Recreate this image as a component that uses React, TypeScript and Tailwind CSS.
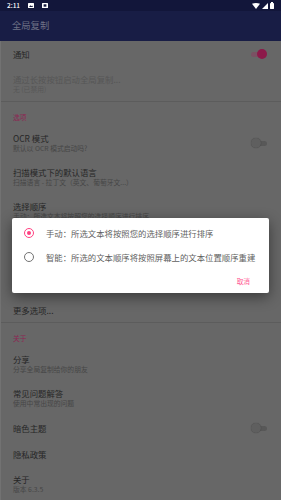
const font = { fontFamily: '"Noto Sans CJK SC", "Noto Sans", sans-serif' };

const Toggle = ({ on }: { on?: boolean }) =>
  on ? (
    <div className="relative w-[16px] h-[10px] flex items-center">
      <div className="w-[14px] h-[5px] rounded-full bg-[#7a5163]" />
      <div className="absolute right-0 top-0 w-[10px] h-[10px] rounded-full bg-[#8c1a4a]" />
    </div>
  ) : (
    <div className="relative w-[16px] h-[10px] flex items-center">
      <div className="w-[14px] h-[5px] ml-[2px] rounded-full bg-[#585858]" />
      <div className="absolute left-0 top-0 w-[10px] h-[10px] rounded-full bg-[#5f5f5f] shadow-[0_0_1px_rgba(0,0,0,0.4)]" />
    </div>
  );

const Row = ({
  title,
  sub,
  toggle,
  h = "h-[34px]",
  divider,
  disabled,
}: {
  title: string;
  sub?: string;
  toggle?: "on" | "off";
  h?: string;
  divider?: boolean;
  disabled?: boolean;
}) => (
  <div
    className={`${h} flex items-center justify-between pl-[12px] pr-[14px] ${
      divider ? "border-b border-[#5c5c5c]" : ""
    }`}
  >
    <div className="flex flex-col">
      <span
        className={`text-[8.4px] leading-[10px] ${
          disabled ? "text-[#565656]" : "text-[#262626]"
        }`}
      >
        {title}
      </span>
      {sub && (
        <span
          className={`text-[6.8px] leading-[10px] ${
            disabled ? "text-[#575757]" : "text-[#464646]"
          }`}
        >
          {sub}
        </span>
      )}
    </div>
    {toggle && <Toggle on={toggle === "on"} />}
  </div>
);

const Category = ({ label }: { label: string }) => (
  <div className="h-[24px] pt-[10px] pl-[12px]">
    <span className="block text-[6.8px] leading-[10px] text-[#8d2653]">{label}</span>
  </div>
);

const Radio = ({ checked }: { checked?: boolean }) => (
  <div
    className={`w-[10px] h-[10px] rounded-full border-[1.5px] flex items-center justify-center shrink-0 ${
      checked ? "border-[#ff4081]" : "border-[#737373]"
    }`}
  >
    {checked && <div className="w-[4.5px] h-[4.5px] rounded-full bg-[#ff4081]" />}
  </div>
);

export default function App() {
  return (
    <div className="relative w-[281px] h-[500px] overflow-hidden bg-[#676767]" style={font}>
      {/* status bar */}
      <div className="h-[11px] bg-[#12163a] flex items-center justify-between px-[7px]">
        <div className="flex items-center gap-[5px]">
          <span className="text-[6.5px] leading-none font-medium text-white">2:11</span>
          <svg width="6" height="5" viewBox="0 0 6 5" className="ml-[3px]">
            <rect x="0" y="0" width="6" height="5" rx="0.5" fill="#fff" />
            <path d="M1 4 L2.5 2.3 L3.5 3.3 L4.2 2.6 L5 4 Z" fill="#12163a" />
          </svg>
          <svg width="6" height="5" viewBox="0 0 6 5" className="ml-[3px]">
            <rect x="0" y="0" width="6" height="5" rx="0.5" fill="#fff" />
            <rect x="1.6" y="1.3" width="2.8" height="2.4" fill="#12163a" />
          </svg>
        </div>
        <div className="flex items-center gap-[1.5px]">
          <svg width="8" height="6" viewBox="0 0 8 6">
            <path d="M0 0.8 Q4 -0.8 8 0.8 L4 6 Z" fill="#fff" />
          </svg>
          <svg width="6" height="6" viewBox="0 0 6 6">
            <path d="M6 0 L6 6 L0 6 Z" fill="#fff" />
          </svg>
          <svg width="4" height="7" viewBox="0 0 4 7" className="ml-[1px]">
            <rect x="1" y="0" width="2" height="1" fill="#fff" />
            <rect x="0" y="1" width="4" height="6" rx="0.4" fill="#fff" />
          </svg>
        </div>
      </div>
      {/* app bar */}
      <div className="h-[30px] bg-[#181d45] flex items-center pl-[12px]">
        <span className="text-[9.3px] text-[#6f7286]">全局复制</span>
      </div>
      {/* list */}
      <div className="flex flex-col border-l border-[#727272]">
        <Row title="通知" toggle="on" h="h-[26px]" />
        <Row
          title="通过长按按钮启动全局复制..."
          sub="无 (已禁用)"
          h="h-[35px]"
          divider
          disabled
        />
        <Category label="选项" />
        <Row title="OCR 模式" sub="默认以 OCR 模式启动吗?" toggle="off" />
        <Row title="扫描模式下的默认语言" sub="扫描语言 - 拉丁文（英文、葡萄牙文...）" />
        <Row title="选择顺序" sub="手动：所选文本将按照您的选择顺序进行排序" />
        <div className="h-[69px]" />
        <Row title="更多选项..." h="h-[26px]" divider />
        <Category label="关于" />
        <Row title="分享" sub="分享全局复制给你的朋友" />
        <Row title="常见问题解答" sub="使用中常出现的问题" />
        <Row title="暗色主题" toggle="off" h="h-[26px]" />
        <Row title="隐私政策" h="h-[26px]" />
        <Row title="关于" sub="版本 6.3.5" />
      </div>
      {/* dialog */}
      <div className="absolute left-[12px] top-[218px] w-[257px] h-[75px] bg-white rounded-[2px] shadow-[0_4px_14px_rgba(0,0,0,0.45)] pt-[3px] flex flex-col">
        <div className="h-[24px] flex items-center pl-[12px] gap-[12px]">
          <Radio checked />
          <span className="text-[8.4px] text-[#5f5f5f] whitespace-nowrap">
            手动：所选文本将按照您的选择顺序进行排序
          </span>
        </div>
        <div className="h-[24px] flex items-center pl-[12px] gap-[12px]">
          <Radio />
          <span className="text-[8.4px] text-[#5f5f5f] whitespace-nowrap">
            智能：所选的文本顺序将按照屏幕上的文本位置顺序重建
          </span>
        </div>
        <div className="h-[24px] flex items-center justify-end pr-[19px]">
          <span className="text-[6.7px] text-[#ff5a92]">取消</span>
        </div>
      </div>
    </div>
  );
}
